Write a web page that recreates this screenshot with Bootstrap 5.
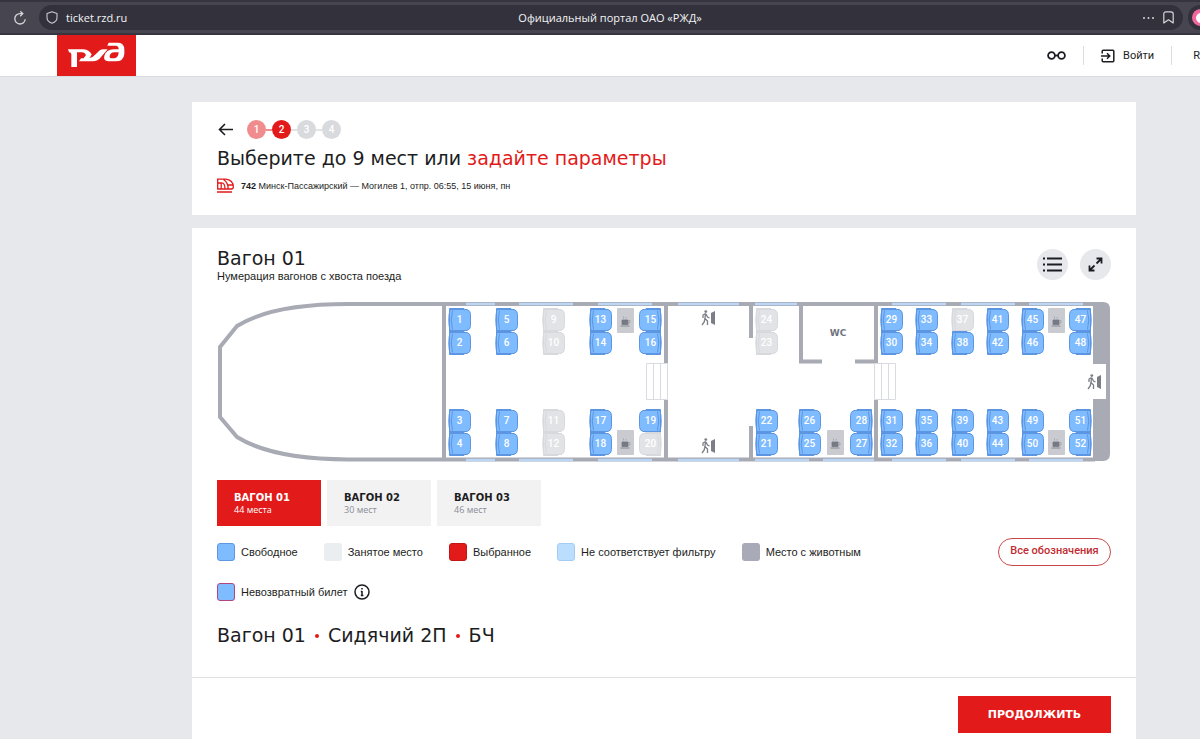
<!DOCTYPE html>
<html lang="ru">
<head>
<meta charset="utf-8">
<meta name="viewport" content="width=device-width, initial-scale=1">
<title>Официальный портал ОАО «РЖД»</title>
<link href="https://cdn.jsdelivr.net/npm/bootstrap@5.3.0/dist/css/bootstrap.min.css" rel="stylesheet">
<style>
:root{--rzd:#e21a1a;--ink:#1c1d22;--wall:#a8aab4}
body{background:#e7e8ec;color:var(--ink);font-family:"Liberation Sans",Arial,sans-serif;font-size:11px;line-height:14px}
svg{display:block;flex:none}
button{font-family:inherit}
.chrome{background:#474650;border-top:2px solid #35343f;border-bottom:2px solid #35343f;height:35px;color:#f4f4f6;font-family:"Open Sans",sans-serif;font-weight:500;padding-left:13px}
.chrome button{background:none;border:0;padding:0;color:#d5d5da}
.omni{background:#33323c;border-radius:13px;height:25px;padding:0 9px 0 7px;margin:0 5px 0 12px}
.omni-side{flex:1 1 0}
.avatar{width:12px;height:25px;background:#33323c;border-radius:13px 0 0 13px}
.site-head{height:42px;background:#fff;border-bottom:1px solid #d9dbe0;padding-left:57px}
.logo{width:79px;height:41px;background:var(--rzd)}
.head-tools{font:400 11px/14px Roboto,sans-serif;gap:17px}
.head-tools button{background:none;border:0;padding:0;color:inherit;font:inherit}
.rule{width:1px;height:19px;background:#dcdde2}
.page{margin:25px 64px 0 192px}
.panel{background:#fff}
.pad{padding-left:25px;padding-right:25px}
.wide{font-family:"DejaVu Sans",sans-serif;font-weight:400;font-size:19px;line-height:24px;margin:0}
.wide a{color:var(--rzd);text-decoration:none}
.trip-panel{padding-top:18px;padding-bottom:22px;margin-bottom:13px}
.trip-panel .wide{margin:7px 0 8px}
.steps a{margin-right:13px}
.step{width:19px;height:19px;border-radius:50%;background:#d9dadd;color:#fff;font:500 10px/19px Roboto,sans-serif;text-align:center}
.step-done{background:#f08c8e}
.step-now{background:var(--rzd)}
.link{width:6px;height:2px;background:#e1e2e5}
.link-done{background:#f08c8e}
.trip{font-size:9px;line-height:12px}
.trip-text{gap:7px}
.wagon-body{padding-top:18px}
.wagon-head{margin-bottom:20px}
.wagon-head p{line-height:12px}
.tools{gap:12px}
.round-btn{width:31px;height:31px;border:0;border-radius:50%;background:#e7e8ec;color:var(--ink);padding:0;place-items:center}
.wagon{position:relative;aspect-ratio:894/160}
.wagon>svg{width:100%;height:100%}
.seat{position:absolute;left:calc(var(--x)/894*100%);top:calc(var(--y)/160*100%);width:calc(23/894*100%);height:calc(24/160*100%);border:0;padding:0;background:none;display:grid;place-items:center;color:#fff;font:500 10px/12px Roboto,sans-serif}
.seat>*{grid-area:1/1}
.seat span{position:relative}
.seat svg{width:100%;height:100%;color:#7fbbff;--edge:#5c96e2}
.seat.flip svg{transform:scaleX(-1)}
.seat:disabled svg{color:#e2e3e6;--edge:#d8d9dd}
.cars{gap:6px;margin-top:18px}
.car{width:104px;height:46px;border:0;background:#f2f2f2;padding:0 17px;text-align:left;color:var(--ink)}
.car b{display:block;font:700 10px/12px "DejaVu Sans",sans-serif}
.car span{display:block;font:9px/11px "Open Sans",sans-serif;color:#8a8d98}
.car.on,.car.on span{background:var(--rzd);color:#fff}
.legend-row{margin-top:12px}
.legend{padding-top:5px;row-gap:22px;column-gap:26px}
.legend li{display:flex;align-items:center;gap:6px;height:18px}
.swatch{width:18px;height:18px;border-radius:3px;border:1px solid transparent}
.free{background:#7fbbff;border-color:#5f98e0}
.busy{background:#eaeef1}
.picked{background:#e21a1a;border-color:#c01616}
.other{background:#bbdeff;border-color:#a3cbf3}
.pet{background:#a8aab8}
.norefund{background:#7fbbff;border-color:#b0477f}
.pill-btn{height:28px;width:113px;border:1px solid #c9484d;border-radius:14px;background:#fff;color:#bf2c31;font:500 11px/14px Roboto,sans-serif;padding:0 0 2px}
.summary{margin:22px 0 30px}
.dot{display:inline-block;width:4px;height:4px;border-radius:50%;background:var(--rzd);margin:0 3px;vertical-align:4px}
.foot{border-top:1px solid #dfe1e5;padding-top:18px;padding-bottom:25px}
.go{width:153px;height:37px;border:0;background:var(--rzd);color:#fff;font:700 11px/16px "DejaVu Sans",sans-serif}
</style>
</head>
<body>
<div class="chrome d-flex align-items-center">
  <button aria-label="Обновить"><svg width="14" height="14" viewBox="0 0 14 14" fill="none" stroke="currentColor" stroke-width="1.3"><path d="M12.2 8.2A5.2 5.2 0 1 1 7 2.6h2.5M7.2.3l2.6 2.3-2.6 2.6"/></svg></button>
  <div class="omni d-flex align-items-center flex-grow-1">
    <div class="omni-side d-flex align-items-center gap-2">
      <svg width="12" height="13" viewBox="0 0 12 13" fill="none" stroke="#c9c9d0" stroke-width="1.1"><path d="M6 .8 11 2.6v4C11 9.500 8.800 11.400 6 12.300 3.200 11.400 1 9.500 1 6.600v-4z" stroke-linejoin="round"/></svg>
      <span>ticket.rzd.ru</span>
    </div>
    <span>Официальный портал ОАО «РЖД»</span>
    <div class="omni-side d-flex align-items-center justify-content-end gap-2">
      <button aria-label="Ещё"><svg width="13" height="4" viewBox="0 0 13 4" fill="currentColor"><circle cx="2" cy="2" r="1"/><circle cx="6.500" cy="2" r="1"/><circle cx="11" cy="2" r="1"/></svg></button>
      <button aria-label="Закладка"><svg width="11" height="13" viewBox="0 0 11 13" fill="none" stroke="currentColor" stroke-width="1.200" stroke-linejoin="round"><path d="M.8 12V3Q.8.800 3 .8h5Q10.200.800 10.200 3v9L5.500 8.800z"/></svg></button>
    </div>
  </div>
  <div class="avatar"><svg width="12" height="25" viewBox="0 0 12 25"><circle cx="12.500" cy="12.500" r="8.500" fill="#f0689b"/><circle cx="13" cy="13" r="5" fill="#fff"/></svg></div>
</div>

<header class="site-head d-flex align-items-center">
  <a href="#" class="logo align-self-start" aria-label="РЖД"><svg width="79" height="41" viewBox="0 0 237 123" fill="#fff"><path d="M33 43H80Q96 44 104 58Q102 64 97 69Q108 68 116 58L126 48Q130 43 138 43H152L132 66Q122 79 108 79H66L72 70H80L87 60Q84 52 76 52H60V96H43V58Q43 52 36 52Z"/><path fill-rule="evenodd" d="M155 23H184Q202 24 202 44V56Q200 79 176 79H154Q138 77 142 62Q147 44 170 43H185Q185 32 176 32H151ZM172 52Q160 53 158 63Q157 70 164 70H172Q184 69 185 52Z"/></svg></a>
  <div class="head-tools ms-auto d-flex align-items-center">
    <button aria-label="Версия для слабовидящих"><svg width="19" height="9" viewBox="0 0 19 9" fill="none" stroke="currentColor" stroke-width="1.800"><circle cx="4.500" cy="4.500" r="3.400"/><circle cx="14.500" cy="4.500" r="3.400"/><path d="M8 4.500h3"/></svg></button>
    <span class="rule"></span>
    <button class="d-flex align-items-center gap-2"><svg width="14" height="14" viewBox="0 0 14 14" fill="none" stroke="currentColor" stroke-width="1.500"><path d="M1.200 4.500V2.200q0-1 1-1h9.600q1 0 1 1v9.600q0 1-1 1H2.200q-1 0-1-1V9.500M0 7h8.500M6 4.200 8.800 7 6 9.800"/></svg>Войти</button>
    <span class="rule"></span>
    <button class="ps-1">R</button>
  </div>
</header>

<main class="page">
  <section class="panel pad trip-panel">
    <div class="steps d-flex align-items-center">
      <a href="#" class="text-reset" aria-label="Назад"><svg width="17" height="13" viewBox="0 0 17 13" fill="none" stroke="currentColor" stroke-width="1.600"><path d="M16 6.500H3M8 1 2.500 6.500 8 12"/></svg></a>
      <span class="step step-done">1</span><span class="link link-done"></span><span class="step step-now">2</span><span class="link"></span><span class="step">3</span><span class="link"></span><span class="step">4</span>
    </div>
    <h1 class="wide">Выберите до 9 мест или <a href="#">задайте параметры</a></h1>
    <p class="trip trip-text d-flex align-items-center mb-0">
      <svg width="17" height="15" viewBox="0 0 17 15" fill="none" stroke="#e21a1a" stroke-width="1.300"><path d="M0 1.200h8.500Q16.300 2 16.300 9q0 2-2 2H.7V1.200M0 14h15M.7 5h3.500v6M4.200 5q3.800-.5 3.800 6M6.500 1.500Q11 4 11.200 11M11 7h5"/></svg>
      <span><b>742</b> Минск-Пассажирский — Могилев 1, отпр. 06:55, 15 июня, пн</span>
    </p>
  </section>

  <section class="panel">
    <div class="pad wagon-body">
      <div class="d-flex justify-content-between align-items-center wagon-head">
        <div>
          <h2 class="wide">Вагон 01</h2>
          <p class="mb-0">Нумерация вагонов с хвоста поезда</p>
        </div>
        <div class="d-flex tools">
          <button class="round-btn d-grid" aria-label="Список"><svg width="19" height="15" viewBox="0 0 19 15" stroke="currentColor" stroke-width="2"><path d="M0 1.500h2M4 1.500h15M0 7.500h2M4 7.500h15M0 13.500h2M4 13.500h15"/></svg></button>
          <button class="round-btn d-grid" aria-label="Развернуть"><svg width="15" height="15" viewBox="0 0 15 15" fill="none" stroke="currentColor" stroke-width="1.800"><path d="M8.500 1.500h5v5M13.500 1.500l-5 5M1.500 8.500v5h5M1.500 13.500l5-5"/></svg></button>
        </div>
      </div>

      <div class="wagon" id="wagon">
        <svg viewBox="0 0 894 160" fill="none">
          <defs>
            <g id="cup"><rect width="17" height="25" rx="1" fill="#c9cbd0"/><path d="M5 12h6v4.500H5zM3.500 18h9" fill="#777a84" stroke="#777a84" stroke-width=".8"/><path d="M11 12.500h2v2.500h-2M6.500 8.500v2M9 9v1.500" stroke="#9a9ca5" stroke-width=".7"/></g>
            <g id="exit" fill="#7b7e87"><circle cx="4.800" cy="1.600" r="1.400"/><path d="M4.500 3.500 2 5v3M5 4l1.500 3L8.500 8M4.500 3.500 4 8.500l2.500 2.500v4M4 8.500l-.8 3.500L1 15" fill="none" stroke="#7b7e87" stroke-width="1.300"/><path d="M10 3l4-2v14l-4-2z"/></g>
            <symbol id="seat" viewBox="0 0 23 24" preserveAspectRatio="none"><path d="M1.500.5h14.500v4H1.500zM1.500 19.500h14.500v4H1.500z" fill="currentColor" stroke="var(--edge)"/><path d="M2 1.500h17q3.500 1 3.500 5v11q0 4-3.500 5H2Q.8 18 .8 12T2 1.500z" fill="currentColor" stroke="var(--edge)"/><path d="M1.500 1v22M4.500 2.500Q2 12 4.500 21.500" stroke="var(--edge)" fill="none"/></symbol>
          </defs>
          <g stroke="#a8aab4" stroke-width="4">
            <path d="M878 2H131Q55 2 20 24L3 45v70l17 20q35 22 111 22.500h747M227 2v156M449 2v59M449 98v60M534 2v34M534 124v34M584 2v57.500h21M638 59.500h23M659 2v59M659 98v60"/>
          </g>
          <path d="M876 0h10q7 0 7 7v145q0 7-7 7h-10V97h13V62h-13z" fill="#a8aab4"/>
          <path id="windows" stroke="#bcd6f5" stroke-width="2.500"/>
          <g fill="#fff" stroke="#dadbe0"><path d="M429.500 61.500h21v36h-21zM436.500 61v36M443.500 61v36M657.500 61.500h21v36h-21zM664.500 61v36M671.500 61v36"/></g>
          <use href="#cup" x="400" y="6"/><use href="#cup" x="400" y="128"/><use href="#cup" x="610" y="128"/><use href="#cup" x="831" y="6"/><use href="#cup" x="831" y="128"/>
          <use href="#exit" x="484" y="8"/><use href="#exit" x="484" y="136"/><use href="#exit" x="870" y="72"/>
          <text x="621" y="34" text-anchor="middle" font-family="DejaVu Sans" font-weight="700" font-size="9" fill="#70737e">WC</text>
        </svg>
      </div>

      <div class="d-flex cars">
        <button class="car on"><b>ВАГОН 01</b><span>44 места</span></button>
        <button class="car"><b>ВАГОН 02</b><span>30 мест</span></button>
        <button class="car"><b>ВАГОН 03</b><span>46 мест</span></button>
      </div>

      <div class="d-flex justify-content-between align-items-start legend-row">
        <ul class="legend list-unstyled d-flex flex-wrap mb-0">
          <li><i class="swatch free"></i>Свободное</li>
          <li><i class="swatch busy"></i>Занятое место</li>
          <li><i class="swatch picked"></i>Выбранное</li>
          <li><i class="swatch other"></i>Не соответствует фильтру</li>
          <li><i class="swatch pet"></i>Место с животным</li>
          <li><i class="swatch norefund"></i>Невозвратный билет <svg width="16" height="16" viewBox="0 0 16 16" fill="none" stroke="#1c1d22" stroke-width="1.500"><circle cx="8" cy="8" r="7"/><path d="M8 7v5M8 4v1.600M6.800 7.500H8M6.800 11.600h2.600"/></svg></li>
        </ul>
        <button class="pill-btn flex-shrink-0">Все обозначения</button>
      </div>

      <h2 class="wide summary">Вагон 01 <i class="dot"></i> Сидячий 2П <i class="dot"></i> БЧ</h2>
    </div>
    <div class="foot pad text-end"><button class="go">ПРОДОЛЖИТЬ</button></div>
  </section>
</main>
<script src="https://cdn.jsdelivr.net/npm/bootstrap@5.3.0/dist/js/bootstrap.bundle.min.js"></script>
<script>
// Each column: x, then seat numbers for the four rows (0 = no seat), and whether it faces left
const columns = [
  [231, [1, 2, 3, 4]], [278, [5, 6, 7, 8]], [325, [9, 10, 11, 12]], [372, [13, 14, 17, 18]],
  [422, [15, 16, 19, 20], true], [538, [24, 23, 22, 21]], [581, [0, 0, 26, 25]], [633, [0, 0, 28, 27], true],
  [663, [29, 30, 31, 32]], [698, [33, 34, 35, 36]], [734, [37, 38, 39, 40]], [769, [41, 42, 43, 44]],
  [804, [45, 46, 49, 50]], [852, [47, 48, 51, 52], true]
];
const rows = [6, 29, 107, 130];
const busy = new Set([9, 10, 11, 12, 20, 23, 24, 37]);
const wagon = document.getElementById('wagon');
for (const [x, seats, flip] of columns) {
  seats.forEach((n, i) => {
    if (!n) return;
    const b = document.createElement('button');
    b.className = 'seat' + (flip ? ' flip' : '');
    b.disabled = busy.has(n);
    b.style.setProperty('--x', x);
    b.style.setProperty('--y', rows[i]);
    b.innerHTML = '<svg aria-hidden="true"><use href="#seat"/></svg><span>' + n + '</span>';
    wagon.append(b);
  });
}
// Window spans along the top and the bottom wall
const shared = [[249, 278], [302, 356], [381, 435], [461, 522], [675, 729], [744, 798], [812, 866]];
const line = (list, y) => list.map(([a, b]) => `M${a} ${y}H${b}`).join('');
document.getElementById('windows').setAttribute('d',
  line([...shared, [538, 580]], 2) + line([...shared, [538, 592], [606, 657]], 158));
</script>
</body>
</html>
